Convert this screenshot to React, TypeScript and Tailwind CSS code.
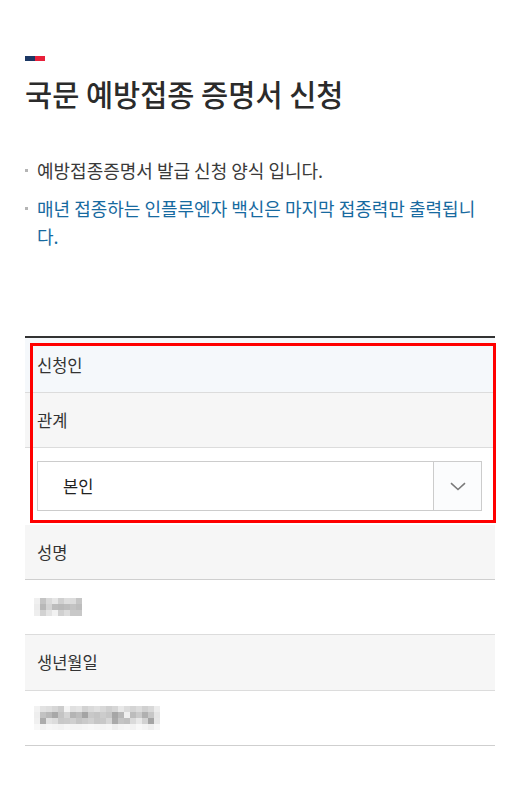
import React from "react";

const nameBlur = [
  ["#f0f0f0", "#c4c4c4", "#dadada", "#e6e6e6", "#d0d0d0", "#dedede", "#dcdcdc", "#c6c6c6"],
  ["#ececec", "#b8b8b8", "#d4d4d4", "#bcbcbc", "#b9b9b9", "#bdbdbd", "#c3c3c3", "#bdbdbd"],
  ["#eeeeee", "#d2d2d2", "#e4e4e4", "#f2f2f2", "#d0d0d0", "#dcdcdc", "#c8c8c8", "#c8c8c8"],
];

const birthBlur = [
  ["#f2f2f2", "#e2e2e2", "#dedede", "#d6d6d6", "#cccccc", "#f4f4f4", "#e0e0e0", "#e4e4e4", "#d2d2d2", "#dadada", "#e0e0e0", "#d8d8d8", "#cfcfcf", "#d6d6d6", "#e8e8e8", "#dcdcdc", "#d4d4d4", "#dcdcdc", "#d0d0d0", "#d8d8d8", "#ececec"],
  ["#eeeeee", "#c2c2c2", "#b8b8b8", "#a8a8a8", "#c4c4c4", "#d4d4d4", "#b4b4b4", "#bcbcbc", "#a4a4a4", "#c8c8c8", "#c4c4c4", "#cccccc", "#c6c6c6", "#a6a6a6", "#b8b8b8", "#f0f0f0", "#bcbcbc", "#cacaca", "#b0b0b0", "#c6c6c6", "#e4e4e4"],
  ["#f0f0f0", "#acacac", "#e2e2e2", "#dcdcdc", "#c8c8c8", "#cacaca", "#cfcfcf", "#c4c4c4", "#cacaca", "#d0d0d0", "#c6c6c6", "#c8c8c8", "#d6d6d6", "#aaaaaa", "#c4c4c4", "#c0c0c0", "#dadada", "#e8e8e8", "#d2d2d2", "#a4a4a4", "#e6e6e6"],
  ["#f8f8f8", "#f2f2f2", "#f6f6f6", "#f4f4f4", "#f2f2f2", "#f6f6f6", "#f4f4f4", "#f4f4f4", "#f6f6f6", "#f8f8f8", "#f6f6f6", "#f4f4f4", "#f6f6f6", "#eeeeee", "#f4f4f4", "#f6f6f6", "#f2f2f2", "#f8f8f8", "#f4f4f4", "#eeeeee", "#f6f6f6"],
];

function Pixels({ data, size }: { data: string[][]; size: number }) {
  const w = data[0].length * size;
  const h = data.length * size;
  return (
    <svg width={w} height={h} viewBox={`0 0 ${w} ${h}`} className="block">
      {data.map((row, r) =>
        row.map((c, i) => (
          <rect key={`${r}-${i}`} x={i * size} y={r * size} width={size} height={size} fill={c} />
        ))
      )}
    </svg>
  );
}

export default function App() {
  return (
    <div
      className="min-h-[788px] bg-white pl-[25px] pr-[18px] pt-[56px] text-[#333]"
      style={{ fontFamily: '"Noto Sans CJK KR", "Noto Sans", sans-serif' }}
    >
      <div className="flex h-[5px] w-[20px]">
        <div className="h-full w-[10px] bg-[#1c3864]" />
        <div className="h-full w-[10px] bg-[#e8203a]" />
      </div>

      <h1 className="mt-[14px] text-[29.5px] font-medium leading-[36px] text-[#2b2b2b]">
        국문 예방접종 증명서 신청
      </h1>

      <ul className="mt-[45px] flex flex-col gap-[10px] text-[18px] leading-[28px]">
        <li className="flex">
          <span className="flex h-[28px] w-[12px] shrink-0 items-center">
            <span className="block h-[3px] w-[3px] bg-[#b5b5b5]" />
          </span>
          <span className="text-[#3a3a3a]">예방접종증명서 발급 신청 양식 입니다.</span>
        </li>
        <li className="flex">
          <span className="flex h-[28px] w-[12px] shrink-0 items-center">
            <span className="block h-[3px] w-[3px] bg-[#b5b5b5]" />
          </span>
          <span className="w-[446px] text-[#176aa0]">
            매년 접종하는 인플루엔자 백신은 마지막 접종력만 출력됩니다.
          </span>
        </li>
      </ul>

      <div className="relative mt-[86px] border-t-2 border-[#333] text-[16.5px]">
        <div className="flex h-[55px] items-center border-b border-[#dcdcdc] bg-[#f5f8fb] pl-[12px]">
          신청인
        </div>
        <div className="flex h-[55px] items-center border-b border-[#dcdcdc] bg-[#f6f6f6] pl-[12px]">
          관계
        </div>
        <div className="bg-white pb-[14px] pl-[12px] pr-[13px] pt-[13px]">
          <div className="flex h-[50px] items-stretch border border-[#cccccc] bg-white">
            <div className="flex flex-1 items-center pl-[25px] text-[#222]">본인</div>
            <div className="flex w-[48px] items-center justify-center border-l border-[#cccccc] bg-[#fbfcfd]">
              <svg width="16" height="9" viewBox="0 0 16 9" fill="none">
                <path d="M1 1.2 L8 7.5 L15 1.2" stroke="#7a7a7a" strokeWidth="1.6" />
              </svg>
            </div>
          </div>
        </div>
        <div className="flex h-[55px] items-center border-b border-[#cfcfcf] bg-[#f6f6f6] pl-[12px]">
          성명
        </div>
        <div className="flex h-[55px] items-center border-b border-[#dcdcdc] bg-white pl-[9px]">
          <Pixels data={nameBlur} size={6} />
        </div>
        <div className="flex h-[56px] items-center border-b border-[#dcdcdc] bg-[#f6f6f6] pl-[12px]">
          생년월일
        </div>
        <div className="flex h-[55px] items-center border-b border-[#cfcfcf] bg-white pl-[9px]">
          <Pixels data={birthBlur} size={6} />
        </div>

        <div className="pointer-events-none absolute left-[5px] right-[-1px] top-[5px] h-[180px] border-[3px] border-[#ff0000]" />
      </div>
    </div>
  );
}
